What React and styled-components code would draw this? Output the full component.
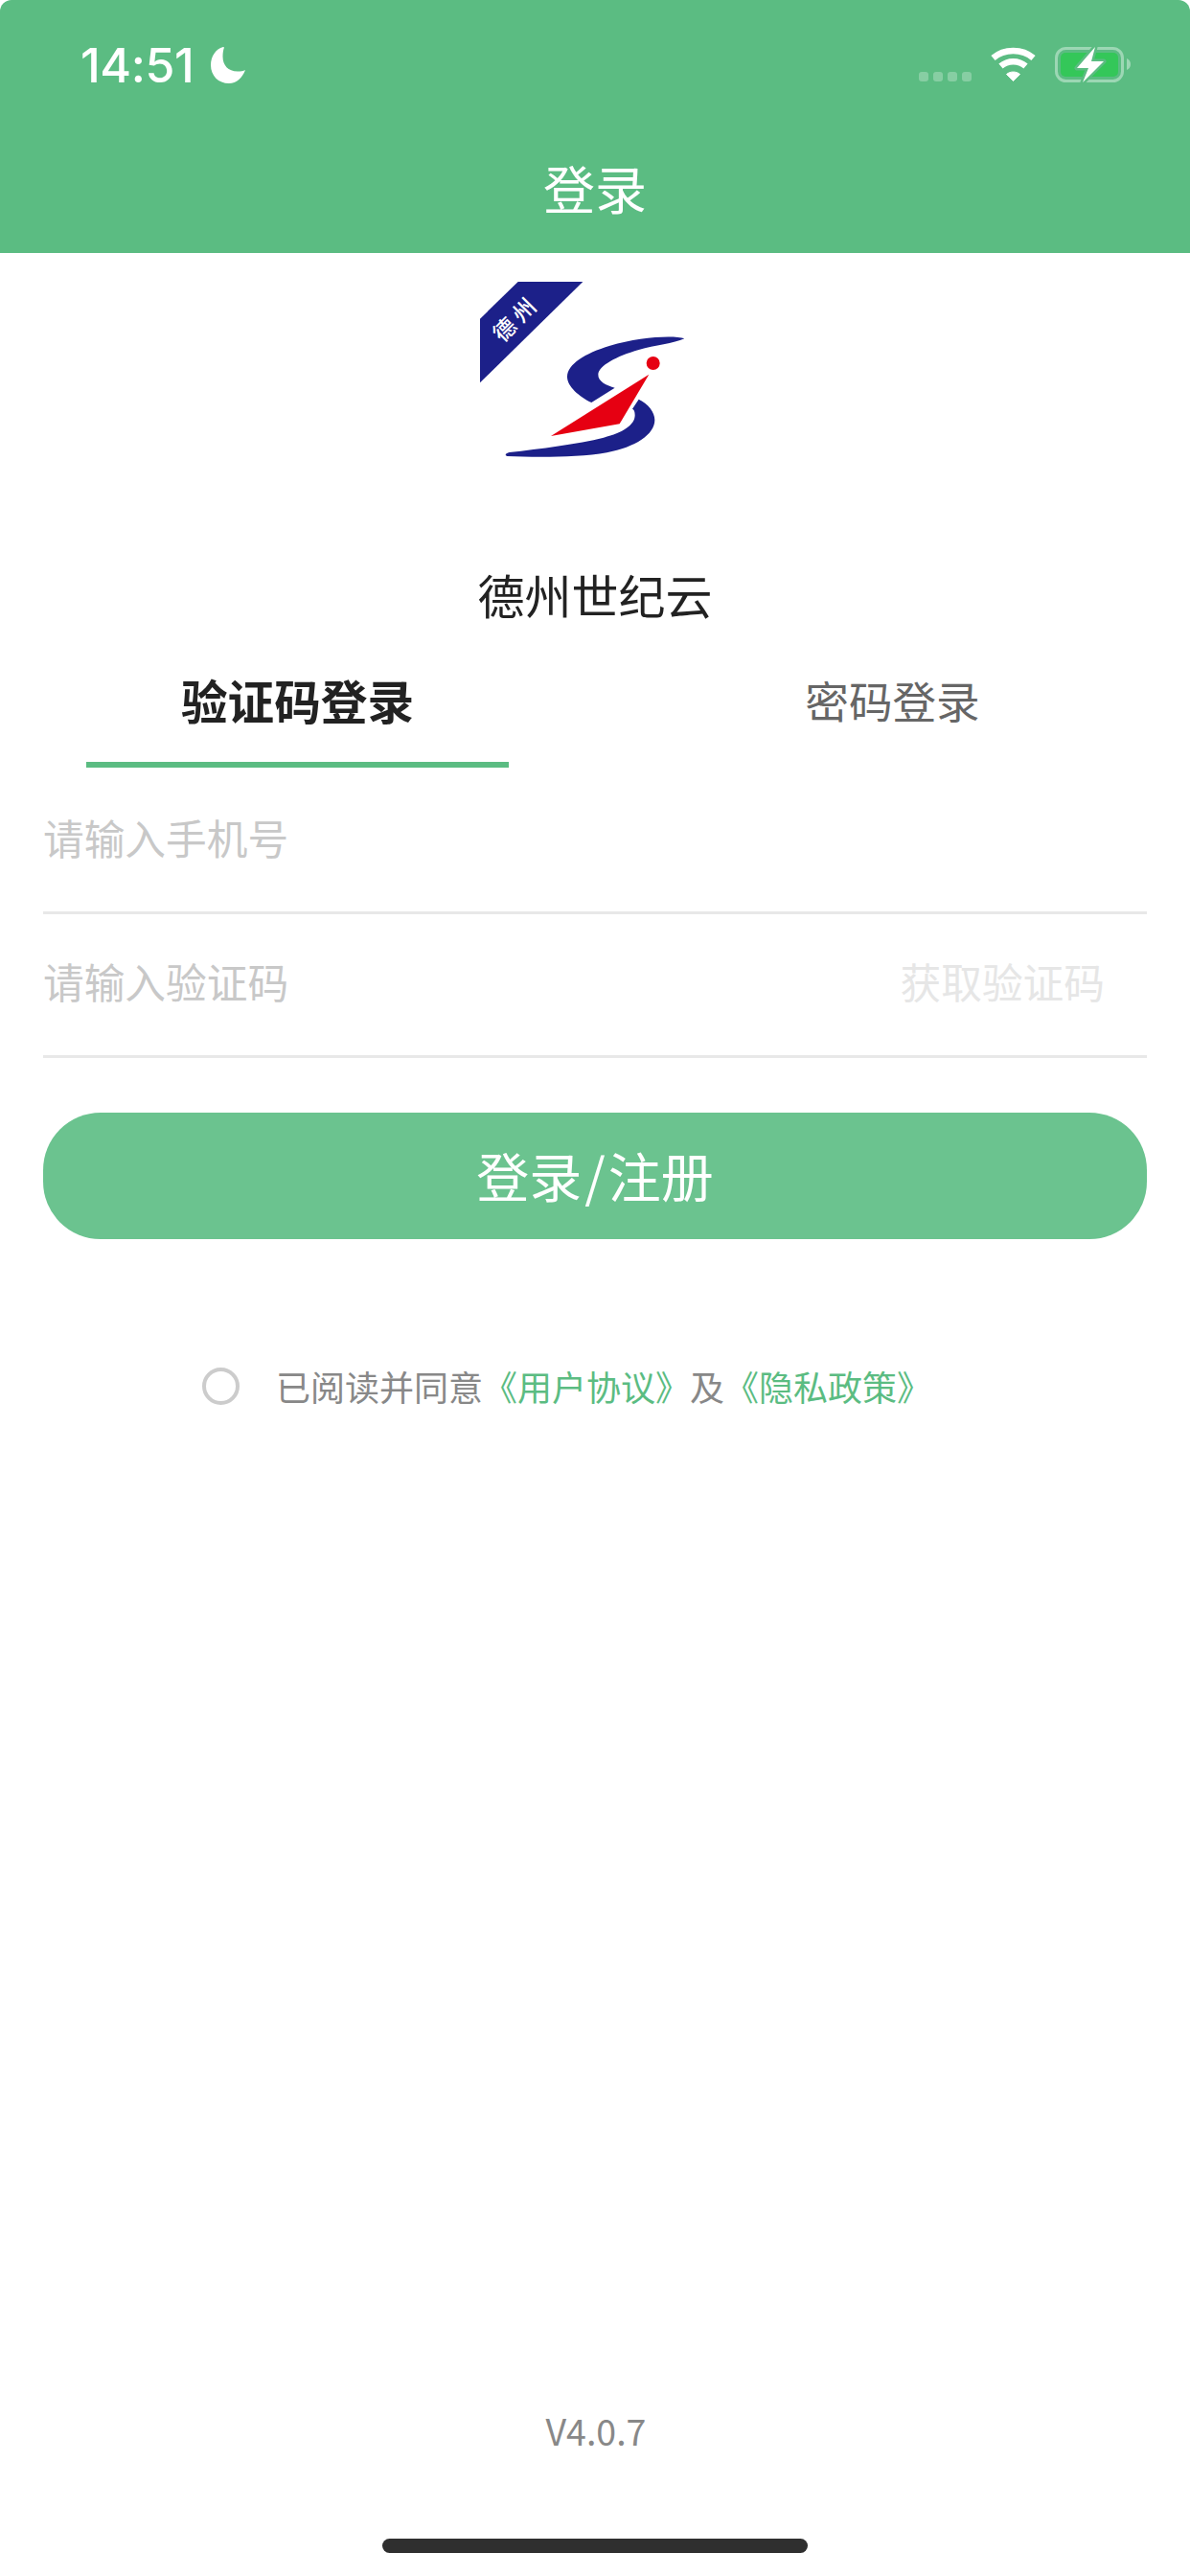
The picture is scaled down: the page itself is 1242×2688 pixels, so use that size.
import styled, { createGlobalStyle } from 'styled-components';

const CJK = `'Noto Sans CJK SC', 'Noto Sans', sans-serif`;
const MAIN_GREEN = '#5bbc82';

const GlobalStyle = createGlobalStyle`
  * {
    box-sizing: border-box;
  }
  html,
  body {
    margin: 0;
    padding: 0;
    background: #fff;
  }
`;

const Page = styled.div`
  display: flex;
  flex-direction: column;
  width: 1242px;
  min-height: 2688px;
  background: #fff;
  font-family: ${CJK};
`;

// Header
const Header = styled.header`
  background: ${MAIN_GREEN};
  border-radius: 12px 12px 0 0;
  color: #fff;
`;
const StatusBar = styled.div`
  display: flex;
  align-items: center;
  justify-content: space-between;
  height: 136px;
  padding: 0 62px 0 84px;
`;
const Clock = styled.div`
  display: flex;
  align-items: center;
  gap: 18px;
  font-family: Inter, 'Liberation Sans', sans-serif;
  font-size: 50px;
  font-weight: 500;
  line-height: 60px;
  letter-spacing: -0.4px;
`;
const StatusIcons = styled.div`
  display: flex;
  align-items: center;
  gap: 20px;
`;
const NavTitle = styled.h1`
  height: 128px;
  margin: 0;
  font-size: 54px;
  font-weight: 400;
  line-height: 120px;
  text-align: center;
`;

// Brand
const Logo = styled.svg`
  display: block;
  width: 280px;
  height: 220px;
  margin: 6px 0 0 470px;
`;
const BrandName = styled.div`
  margin-top: 100px;
  color: #222;
  font-size: 49px;
  line-height: 60px;
  text-align: center;
`;

// Tabs
const Tabs = styled.div`
  display: flex;
  padding-top: 50px;
`;
const Tab = styled.div`
  display: flex;
  flex: 1;
  flex-direction: column;
  align-items: center;
  color: ${(p) => (p.$active ? '#222' : '#666')};
  font-size: ${(p) => (p.$active ? '48.6px' : '45.6px')};
  font-weight: ${(p) => (p.$active ? 700 : 400)};
  line-height: 60px;
`;
const TabLine = styled.div`
  width: 441px;
  height: 6px;
  margin-top: 35px;
  background: ${(p) => (p.$active ? MAIN_GREEN : 'transparent')};
`;

// Form
const Form = styled.div`
  display: flex;
  flex-direction: column;
  padding: 3px 45px 0;
`;
const Field = styled.div`
  display: flex;
  align-items: center;
  justify-content: space-between;
  height: 150px;
  padding-bottom: 9px;
  border-bottom: 3px solid #e8e8e8;
`;
const Placeholder = styled.span`
  color: #c8c8c8;
  font-size: 42.7px;
  line-height: 60px;
`;
const CodeButton = styled.span`
  margin-right: 44px;
  color: #e6e6e6;
  font-size: 42.7px;
  line-height: 60px;
`;
const SubmitButton = styled.div`
  display: flex;
  align-items: center;
  justify-content: center;
  height: 132px;
  margin-top: 57px;
  padding-bottom: 4px;
  background: #6bc38f;
  border-radius: 60px;
  color: #fff;
  font-size: 55px;
  line-height: 60px;
`;
const SubmitSlash = styled.span`
  margin: 0 3px;
`;

// Agreement
const Agreement = styled.div`
  display: flex;
  align-items: center;
  gap: 38px;
  margin-top: 128px;
  padding-left: 211px;
`;
const Radio = styled.span`
  width: 39px;
  height: 39px;
  border: 4px solid #ccc;
  border-radius: 50%;
`;
const AgreementText = styled.span`
  color: #888;
  font-size: 36px;
  line-height: 50px;
`;
const AgreementLink = styled.span`
  color: ${MAIN_GREEN};
`;

// Footer
const Footer = styled.footer`
  display: flex;
  flex-direction: column;
  align-items: center;
  margin-top: auto;
  padding-bottom: 24px;
`;
const Version = styled.div`
  padding-left: 2px;
  color: #888;
  font-size: 37.5px;
  line-height: 50px;
`;
const HomeIndicator = styled.div`
  width: 444px;
  height: 15px;
  margin-top: 88px;
  background: #2f2f2f;
  border-radius: 8px;
`;

const MoonIcon = () => (
  <svg width='36' height='38' viewBox='0 0 36 38' fill='#fff'>
    <path d='M13 0C5 2 0 10 0 19c0 11 8 19 19 19 8 0 14-6 17-14-2 1-5 1.500-8 1.500-10 0-15.500-6.500-15.500-15.500 0-4 .5-7 1.500-9.500z' />
  </svg>
);

const SignalDots = () => (
  <svg width='55' height='40' viewBox='0 0 55 40' fill='#fff' fillOpacity='0.27'>
    <rect x='0' y='27' width='10' height='10' rx='3' />
    <rect x='15' y='27' width='10' height='10' rx='3' />
    <rect x='30' y='27' width='10' height='10' rx='3' />
    <rect x='45' y='27' width='10' height='10' rx='3' />
  </svg>
);

const WifiIcon = () => (
  <svg width='47' height='40' viewBox='0 0 47 40' fill='none'>
    <g transform='translate(0 1)'>
      <path d='M2.500 11.500C14 1.500 33 1.500 44.500 11.500' stroke='#fff' strokeWidth='6.500' />
      <path d='M10.500 20C18 13.500 29 13.500 36.500 20' stroke='#fff' strokeWidth='6.500' />
      <path
        d='M16.500 28.500C20.500 25.200 26.500 25.200 30.500 28.500L23.500 35.500Z'
        fill='#fff'
        stroke='#fff'
        strokeWidth='1'
        strokeLinejoin='round'
      />
    </g>
  </svg>
);

const BatteryIcon = () => (
  <svg width='79' height='40' viewBox='0 0 79 40' fill='none'>
    <g transform='translate(0 1)'>
      <rect x='1.500' y='1.500' width='69' height='34' rx='10' stroke='#fff' strokeOpacity='0.4' strokeWidth='3' />
      <rect x='6' y='6' width='60' height='25' rx='5' fill='#34c759' />
      <path d='M75 12c2.500 1 4 3.200 4 6s-1.500 5-4 6z' fill='#fff' fillOpacity='0.4' />
      <path
        d='M42 0L23 22h12l-6 15L51 15H38z'
        fill='#fff'
        stroke={MAIN_GREEN}
        strokeWidth='5'
        strokeLinejoin='round'
        paintOrder='stroke'
      />
    </g>
  </svg>
);

const BrandLogo = () => (
  <Logo viewBox='0 0 840 660'>
    <path d='M212 72H415L93 388V188Z' fill='#1c2089' />
    <text
      x='203'
      y='183'
      transform='rotate(-45 203 183)'
      textAnchor='middle'
      dominantBaseline='central'
      fill='#fff'
      fontSize='70'
      fontWeight='500'
      letterSpacing='16'
      fontFamily={CJK}
    >
      德州
    </text>
    <path
      d='M733 250C700 238 590 245 500 272 420 296 368 330 366 368 365 400 405 432 442 450L515 404C490 396 462 385 463 362 465 335 520 305 590 285 640 271 700 265 733 250Z'
      fill='#1c2089'
    />
    <path d='M622 362L315 555 530 517Z' fill='#e60012' />
    <circle cx='635' cy='327' r='21' fill='#e60012' />
    <path
      d='M590 440C620 455 640 480 640 505 640 550 580 590 490 607 400 623 260 622 178 618 170 615 172 610 185 606 280 595 400 580 480 560 540 545 578 520 578 490 578 478 575 472 570 470Z'
      fill='#1c2089'
    />
  </Logo>
);

export default function App() {
  return (
    <Page>
      <GlobalStyle />
      <Header>
        <StatusBar>
          <Clock>
            14:51
            <MoonIcon />
          </Clock>
          <StatusIcons>
            <SignalDots />
            <WifiIcon />
            <BatteryIcon />
          </StatusIcons>
        </StatusBar>
        <NavTitle>登录</NavTitle>
      </Header>

      <BrandLogo />
      <BrandName>德州世纪云</BrandName>

      <Tabs>
        <Tab $active>
          验证码登录
          <TabLine $active />
        </Tab>
        <Tab>
          密码登录
          <TabLine />
        </Tab>
      </Tabs>

      <Form>
        <Field>
          <Placeholder>请输入手机号</Placeholder>
        </Field>
        <Field>
          <Placeholder>请输入验证码</Placeholder>
          <CodeButton>获取验证码</CodeButton>
        </Field>
        <SubmitButton>
          登录<SubmitSlash>/</SubmitSlash>注册
        </SubmitButton>
      </Form>

      <Agreement>
        <Radio />
        <AgreementText>
          已阅读并同意<AgreementLink>《用户协议》</AgreementLink>及
          <AgreementLink>《隐私政策》</AgreementLink>
        </AgreementText>
      </Agreement>

      <Footer>
        <Version>V4.0.7</Version>
        <HomeIndicator />
      </Footer>
    </Page>
  );
}
